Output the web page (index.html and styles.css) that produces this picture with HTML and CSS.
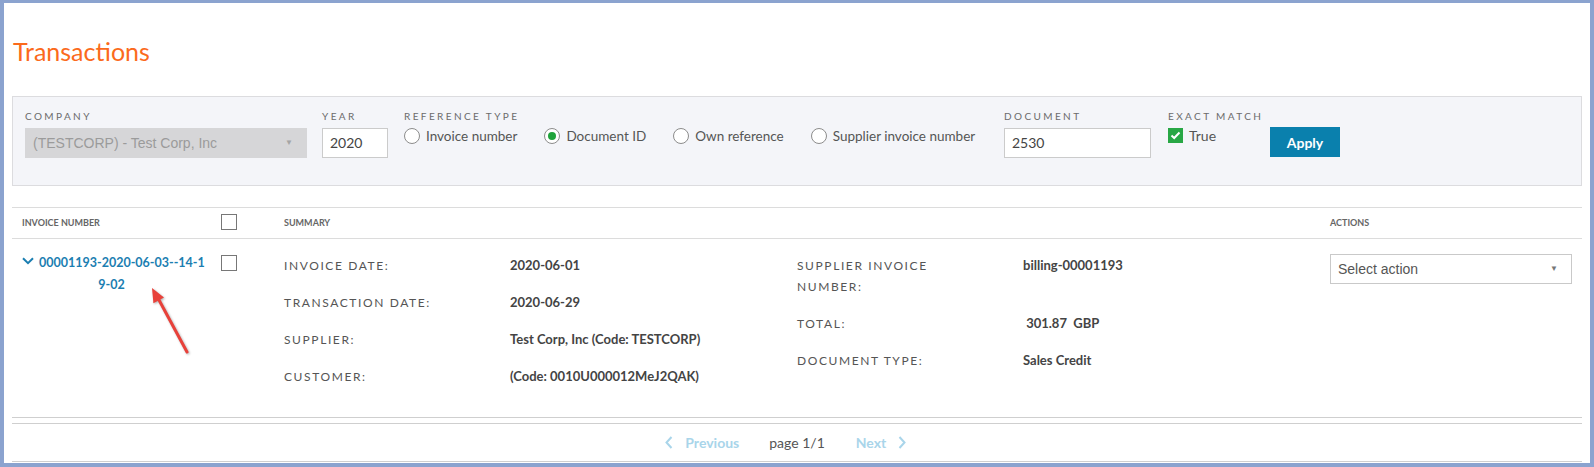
FILE: index.html
```html
<!DOCTYPE html>
<html lang="en">
<head>
  <meta charset="UTF-8">
  <title>Transactions</title>
  <link rel="stylesheet" href="styles.css">
</head>
<body>
<div class="frame">
  <h1 class="title">Transactions</h1>

  <!-- Filter panel -->
  <div class="filters">
    <div class="field f-company">
      <label class="flabel">Company</label>
      <div class="select disabled">(TESTCORP) - Test Corp, Inc<span class="caret">&#9660;</span></div>
    </div>
    <div class="field f-year">
      <label class="flabel">Year</label>
      <div class="text-input">2020</div>
    </div>
    <div class="field f-ref">
      <label class="flabel">Reference type</label>
      <div class="radios">
        <span class="radio"><span class="dot"></span>Invoice number</span>
        <span class="radio checked"><span class="dot"></span>Document ID</span>
        <span class="radio"><span class="dot"></span>Own reference</span>
        <span class="radio"><span class="dot"></span>Supplier invoice number</span>
      </div>
    </div>
    <div class="field f-doc">
      <label class="flabel">Document</label>
      <div class="text-input">2530</div>
    </div>
    <div class="field f-exact">
      <label class="flabel">Exact match</label>
      <span class="check-label">
        <span class="check on">
          <svg width="11" height="9" viewBox="0 0 11 9"><path d="M1.5 4.5 L4.2 7 L9.5 1.5" fill="none" stroke="#fff" stroke-width="2"/></svg>
        </span>True
      </span>
    </div>
    <button class="btn-apply">Apply</button>
  </div>

  <!-- Table -->
  <div class="tbl">
    <div class="tr thead">
      <div class="td">Invoice number</div>
      <div class="td"><span class="box"></span></div>
      <div class="td">Summary</div>
      <div class="td">Actions</div>
    </div>
    <div class="tr trow">
      <div class="td c-inv">
        <a href="#" class="inv-link"><svg class="chev" width="12" height="8" viewBox="0 0 12 8"><path d="M1 1.2 L6 6.2 L11 1.2" fill="none" stroke="#1b7eb1" stroke-width="2"/></svg>00001193-2020-06-03--14-1<br>9-02</a>
      </div>
      <div class="td"><span class="box"></span></div>
      <div class="td c-sum">
        <div class="sum-col col-a">
          <div class="item"><span class="k">Invoice date:</span><span class="v">2020-06-01</span></div>
          <div class="item"><span class="k">Transaction date:</span><span class="v">2020-06-29</span></div>
          <div class="item"><span class="k">Supplier:</span><span class="v">Test Corp, Inc (Code: TESTCORP)</span></div>
          <div class="item"><span class="k">Customer:</span><span class="v">(Code: 0010U000012MeJ2QAK)</span></div>
        </div>
        <div class="sum-col col-b">
          <div class="item"><span class="k">Supplier invoice number:</span><span class="v">billing-00001193</span></div>
          <div class="item"><span class="k">Total:</span><span class="v">&nbsp;301.87&nbsp; GBP</span></div>
          <div class="item"><span class="k">Document type:</span><span class="v">Sales Credit</span></div>
        </div>
      </div>
      <div class="td c-act">
        <div class="select">Select action<span class="caret">&#9660;</span></div>
      </div>
    </div>
  </div>

  <!-- Pagination -->
  <div class="pager">
    <a href="#" class="pg prev"><svg width="8" height="13" viewBox="0 0 8 13"><path d="M6.5 1 L1.5 6.5 L6.5 12" fill="none" stroke="#a9d5ea" stroke-width="2"/></svg>Previous</a>
    <span class="pg-info">page 1/1</span>
    <a href="#" class="pg next">Next<svg width="8" height="13" viewBox="0 0 8 13"><path d="M1.5 1 L6.5 6.5 L1.5 12" fill="none" stroke="#a9d5ea" stroke-width="2"/></svg></a>
  </div>

  <!-- annotation arrow -->
  <svg class="note-arrow" width="60" height="80" viewBox="0 0 60 80">
    <line x1="43" y1="69" x2="15" y2="17" stroke="#e8413a" stroke-width="3" stroke-linecap="round"/>
    <polygon points="8,5 20,14.4 9.4,20.2" fill="#e8413a"/>
  </svg>
</div>
</body>
</html>
```

FILE: styles.css
```css
/* base */
body {
  margin: 0;
  padding: 0;
  font-family: Lato, "Open Sans", Arial, sans-serif;
  color: #555;
  background: #fff;
}
.frame {
  position: relative;
  height: 467px;
  box-sizing: border-box;
  border: 4px solid #8ba3cf;
  border-top-width: 3px;
  padding: 0 8px;
  overflow: hidden;
}
.title {
  margin: 32px 0 29px 1px;
  font-size: 25px;
  line-height: 32px;
  font-weight: 400;
  color: #fb6a1c;
}

/* filter panel */
.filters {
  display: flex;
  align-items: flex-start;
  gap: 15px;
  background: #f4f5f9;
  border: 1px solid #dcdcdf;
  padding: 13px 12px 27px;
}
.field {
  display: flex;
  flex-direction: column;
  flex-shrink: 0;
}
.flabel {
  font-size: 10px;
  line-height: 12px;
  letter-spacing: 2.4px;
  text-transform: uppercase;
  color: #6b6b6b;
  margin-bottom: 6px;
  white-space: nowrap;
}
.f-company { width: 282px; }
.f-year { width: 66px; }
.f-ref { width: 584px; margin-left: 1px; }
.f-doc { width: 147px; margin-left: 1px; }
.f-exact { width: 87px; margin-left: 2px; }

.select {
  position: relative;
  height: 30px;
  box-sizing: border-box;
  border: 1px solid #c9c9c9;
  background: #fff;
  font-family: "Liberation Sans", Arial, sans-serif;
  font-size: 14px;
  line-height: 28px;
  padding-left: 7px;
  color: #555;
}
.select.disabled {
  background: #d6d6d8;
  border-color: #d6d6d8;
  color: #9b9b9b;
}
.caret {
  position: absolute;
  right: 13px;
  top: 0;
  font-size: 8px;
  color: #777;
}
.select.disabled .caret { color: #a5a5a5; }

.text-input {
  height: 30px;
  box-sizing: border-box;
  border: 1px solid #cbcbcb;
  background: #fff;
  font-size: 14px;
  line-height: 28px;
  padding-left: 7px;
  color: #444;
}

.radios {
  display: flex;
  gap: 27px;
}
.radio {
  display: inline-flex;
  align-items: center;
  gap: 6px;
  font-size: 13.5px;
  line-height: 16px;
  color: #555;
  white-space: nowrap;
  flex-shrink: 0;
}
.dot {
  width: 16px;
  height: 16px;
  box-sizing: border-box;
  border: 1px solid #8c8c8c;
  border-radius: 50%;
  background: #fff;
  position: relative;
  flex-shrink: 0;
}
.radio.checked .dot::after {
  content: "";
  position: absolute;
  left: 3px;
  top: 3px;
  width: 8px;
  height: 8px;
  border-radius: 50%;
  background: #1fa33b;
}

.check-label {
  display: inline-flex;
  align-items: center;
  gap: 6px;
  font-size: 14px;
  line-height: 15px;
  color: #555;
}
.check {
  width: 15px;
  height: 15px;
  display: inline-flex;
  align-items: center;
  justify-content: center;
}
.check.on { background: #28a745; }

.btn-apply {
  margin-top: 17px;
  margin-left: 0;
  width: 70px;
  height: 30px;
  border: 0;
  background: #0a80ad;
  color: #fff;
  font-family: Lato, Arial, sans-serif;
  font-weight: 700;
  font-size: 14px;
}

/* table */
.tbl {
  margin-top: 21px;
  border-top: 1px solid #dcdcdc;
}
.tr {
  display: grid;
  grid-template-columns: 199px 63px 1fr 262px;
}
.td {
  padding-left: 10px;
}
.thead {
  border-bottom: 1px solid #dcdcdc;
  height: 30px;
  font-size: 9px;
  font-weight: 700;
  text-transform: uppercase;
  color: #666;
  line-height: 30px;
}
.box {
  display: inline-block;
  width: 16px;
  height: 16px;
  box-sizing: border-box;
  border: 1px solid #777;
  background: #fff;
  vertical-align: middle;
  margin-top: -3px;
}
.trow {
  border-bottom: 1px solid #cfcfcf;
  height: 178px;
}
.trow .td { padding-top: 16px; }
.trow .td:nth-child(2) { padding-top: 16px; line-height: 16px; }
.trow .c-inv {
  padding: 12px 10px 0;
  text-align: center;
}
.inv-link {
  color: #1b7eb1;
  font-weight: 700;
  font-size: 12.5px;
  line-height: 21px;
  text-decoration: none;
  white-space: nowrap;
}
.chev {
  margin-right: 5px;
  vertical-align: 2px;
}

.c-sum {
  display: flex;
}
.trow .c-sum { padding-top: 16px; }
.sum-col {
  display: flex;
  flex-direction: column;
  gap: 16px;
}
.col-a { width: 513px; }
.item {
  display: flex;
  line-height: 21px;
}
.k {
  width: 190px;
  margin-right: 36px;
  font-size: 12px;
  letter-spacing: 1.6px;
  text-transform: uppercase;
  color: #555;
}
.v {
  font-size: 13px;
  font-weight: 700;
  color: #444;
}
.trow .c-act {
  padding: 15px 10px 0;
}

/* pagination */
.pager {
  margin-top: 5px;
  border-top: 1px solid #cfcfcf;
  border-bottom: 1px solid #cfcfcf;
  height: 37px;
  display: grid;
  grid-template-columns: 1fr auto 1fr;
  align-items: center;
  font-size: 14px;
}
.pg {
  display: inline-flex;
  align-items: center;
  gap: 12px;
  color: #a9d5ea;
  font-weight: 700;
  text-decoration: none;
}
.prev { justify-self: end; margin-right: 30px; }
.next { justify-self: start; margin-left: 31px; }
.pg-info { color: #555; }

/* red annotation arrow */
.note-arrow {
  position: absolute;
  left: 140px;
  top: 280px;
  filter: drop-shadow(1px 1px 1px rgba(0,0,0,0.3));
}
```
